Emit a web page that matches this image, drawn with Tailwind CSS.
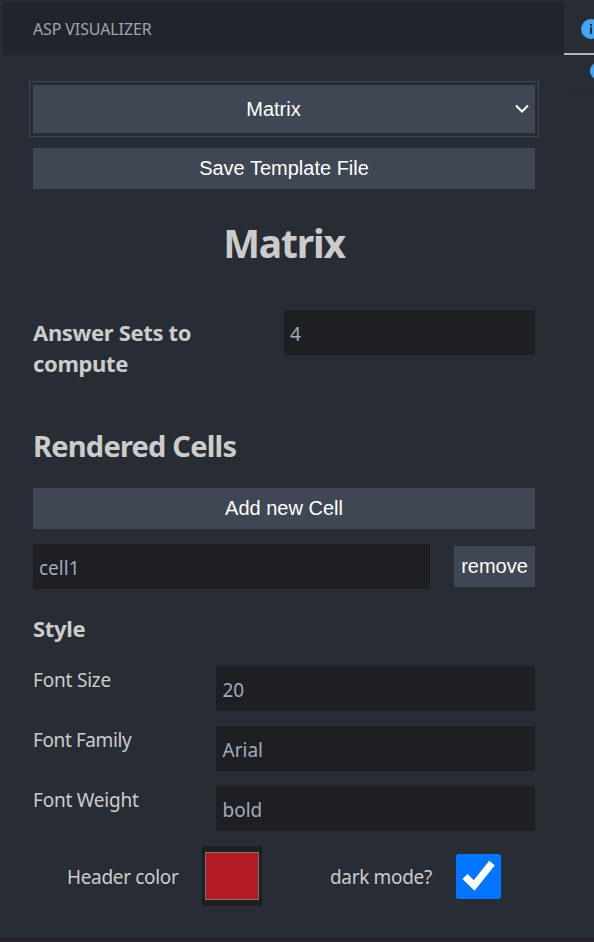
<!DOCTYPE html>
<html lang="en">
<head>
<meta charset="utf-8">
<title>ASP Visualizer</title>
<script src="https://cdn.jsdelivr.net/npm/@tailwindcss/browser@4"></script>
</head>
<body class="relative flex h-[942px] w-[594px] overflow-hidden bg-[#282c34] font-['Noto_Sans',sans-serif] text-[19px] text-[#cccccc]">
<main class="flex w-[564px] shrink-0 flex-col">
  <header class="mt-[2px] ml-[3px] flex h-[53px] shrink-0 items-center bg-[#21252b] pl-[30px] text-[16px] tracking-[-0.12px] text-[#9da5b4]"><span>ASP VISUALIZER</span></header>
  <div class="flex w-[535px] flex-col pt-[26px] pl-[33px]">
    <div class="-mx-1 border border-[#404754] p-[3px]">
      <div class="relative flex h-12 items-center justify-center bg-[#404754] pr-[21px] font-['Liberation_Sans',sans-serif] text-[20px] text-white">
        <span>Matrix</span>
        <svg class="absolute top-[19px] right-[6px]" width="14" height="10" viewBox="0 0 14 10" fill="none" stroke="white" stroke-width="2"><path d="M1 1.5 L7 7.5 L13 1.5"/></svg>
      </div>
    </div>
    <button class="mt-[11px] h-[41px] bg-[#404754] pb-[2px] font-['Liberation_Sans',sans-serif] text-[20px] text-white">Save Template File</button>
    <h1 class="mt-[27px] text-center text-[39px] leading-[54px] font-bold tracking-[-1.2px]">Matrix</h1>
    <div class="mt-[40px] flex h-[72px] justify-between">
      <h3 class="mt-[7px] w-[190px] text-[22px] leading-[31px] font-bold tracking-[-0.34px]">Answer Sets to compute</h3>
      <div class="h-[45px] w-[251px] bg-[#1e1f22] pt-[1px] pl-[6px] leading-[46px] text-[#a0abbd]">4</div>
    </div>
    <h2 class="mt-[44px] h-[40px] text-[29px] leading-[40px] font-bold tracking-[-0.78px]">Rendered Cells</h2>
    <button class="mt-[22px] h-[41px] bg-[#404754] pb-[2px] font-['Liberation_Sans',sans-serif] text-[20px] text-white">Add new Cell</button>
    <div class="mt-[15px] flex items-start justify-between">
      <div class="h-[45px] w-[397px] bg-[#1e1f22] pt-[1px] pl-[6px] leading-[46px] text-[#a0abbd]">cell1</div>
      <button class="mt-[2px] h-[41px] w-[81px] bg-[#404754] pb-[2px] font-['Liberation_Sans',sans-serif] text-[20px] text-white">remove</button>
    </div>
    <h3 class="mt-[23px] mb-px h-[32px] text-[22px] leading-[32px] font-bold tracking-[-0.3px]">Style</h3>
    <div class="mt-[21px] flex flex-col gap-[15px]">
      <div class="flex h-[45px] justify-between"><label class="leading-[28px] tracking-[-0.2px]">Font Size</label><div class="w-[319px] bg-[#1e1f22] pt-[1px] pl-[6.5px] leading-[46px] text-[#a0abbd]">20</div></div>
      <div class="flex h-[45px] justify-between"><label class="leading-[28px] tracking-[-0.4px]">Font Family</label><div class="w-[319px] bg-[#1e1f22] pt-[1px] pl-[6.5px] leading-[46px] text-[#a0abbd]">Arial</div></div>
      <div class="flex h-[45px] justify-between"><label class="leading-[28px] tracking-[-0.22px]">Font Weight</label><div class="w-[319px] bg-[#1e1f22] pt-[1px] pl-[6.5px] leading-[46px] text-[#a0abbd]">bold</div></div>
    </div>
    <div class="mt-[15px] flex h-[60px] items-center pl-[34px]">
      <label class="w-[135px] pt-[2px] tracking-[-0.34px]">Header color</label>
      <div class="h-[60px] w-[60px] bg-[#1e1f22] px-[3px] py-[6px]"><div class="h-[48px] border border-[#767676] bg-[#b51b21]"></div></div>
      <label class="ml-[68px] w-[126px] pt-[2px] tracking-[-0.34px]">dark mode?</label>
      <svg width="45" height="45" viewBox="0 0 45 45" class="shrink-0"><rect width="45" height="45" rx="2.5" fill="#0075ff"/><path d="M9 22.5 L18.2 31.5 L36 9" fill="none" stroke="white" stroke-width="7.2"/></svg>
    </div>
  </div>
</main>
<aside class="flex w-[30px] shrink-0 flex-col overflow-hidden">
  <div class="flex h-[55px] shrink-0 border-b-2 border-[#b3b3b3] pt-[19px] pl-[17px]">
    <svg class="shrink-0" width="20" height="20" viewBox="0 0 20 20"><circle cx="10" cy="10" r="10" fill="#42a5f5"/><path d="M9 5h2v2H9zM9 8h2v7H9z" fill="#282c34"/></svg>
  </div>
  <div class="flex h-[34px] shrink-0 border-b border-[#25292f] pt-[7px] pl-[26px]">
    <svg class="shrink-0" width="18" height="18" viewBox="0 0 18 18"><circle cx="9" cy="9" r="9" fill="#42a5f5"/></svg>
  </div>
</aside>
<div class="absolute inset-x-0 bottom-0 h-[4px] bg-[#25222c]"></div>
</body>
</html>
